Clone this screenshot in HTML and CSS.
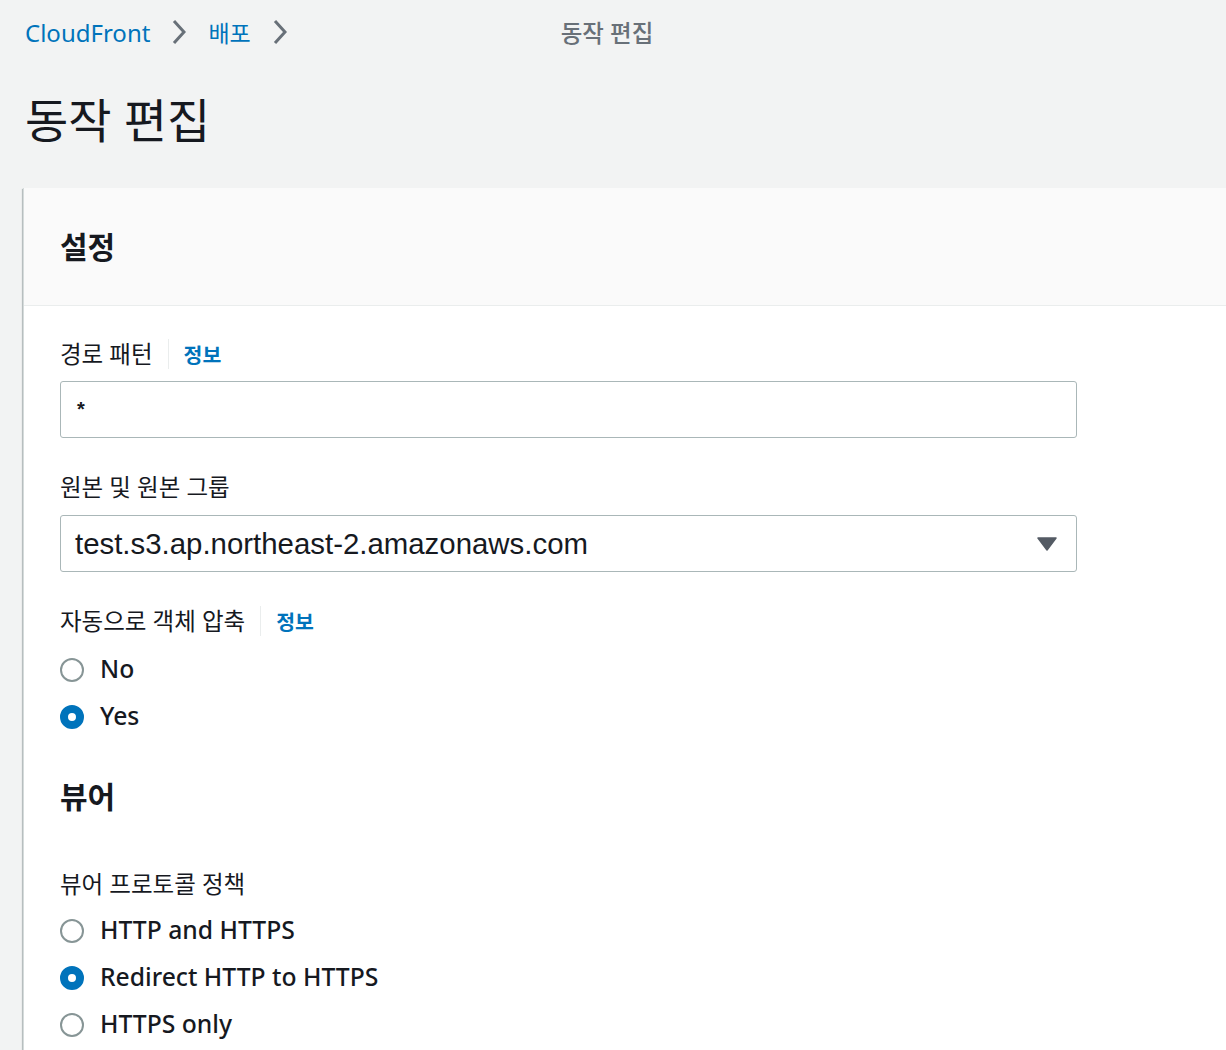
FILE: index.html
```html
<!DOCTYPE html>
<html lang="ko">
<head>
<meta charset="utf-8">
<title>동작 편집</title>
<link rel="stylesheet" href="styles.css">
</head>
<body>
<div class="page">
  <nav class="crumbs">
    <a class="crumb-link" href="#">CloudFront</a>
    <svg class="chev" width="14" height="26" viewBox="0 0 14 26"><path d="M2 2 L12 13 L2 24" fill="none" stroke="#687078" stroke-width="3" stroke-linejoin="miter"/></svg>
    <a class="crumb-link crumb-ko" href="#">배포</a>
    <svg class="chev" width="14" height="26" viewBox="0 0 14 26"><path d="M2 2 L12 13 L2 24" fill="none" stroke="#687078" stroke-width="3" stroke-linejoin="miter"/></svg>
    <span class="crumb-current">동작 편집</span>
  </nav>
  <h1 class="title">동작 편집</h1>

  <section class="card">
    <header class="card-head">
      <h2 class="card-title">설정</h2>
    </header>
    <div class="card-body">
      <div class="label-row label-first">
        <span class="label">경로 패턴</span>
        <span class="divider"></span>
        <a class="info" href="#">정보</a>
      </div>
      <div class="input">*</div>

      <div class="label-row label-gap">
        <span class="label">원본 및 원본 그룹</span>
      </div>
      <div class="select">
        <span class="select-text">test.s3.ap.northeast-2.amazonaws.com</span>
        <svg class="caret" width="20" height="14" viewBox="0 0 20 14"><path d="M1 1 L19 1 L10 13 Z" fill="#545b64" stroke="#545b64" stroke-width="1.5" stroke-linejoin="round"/></svg>
      </div>

      <div class="label-row label-gap">
        <span class="label">자동으로 객체 압축</span>
        <span class="divider"></span>
        <a class="info" href="#">정보</a>
      </div>
      <div class="radios radios-a">
        <div class="radio-row"><span class="radio"></span><span class="radio-label">No</span></div>
        <div class="radio-row"><span class="radio checked"></span><span class="radio-label">Yes</span></div>
      </div>

      <h2 class="section-title">뷰어</h2>

      <div class="label-row label-viewer">
        <span class="label">뷰어 프로토콜 정책</span>
      </div>
      <div class="radios radios-b">
        <div class="radio-row"><span class="radio"></span><span class="radio-label">HTTP and HTTPS</span></div>
        <div class="radio-row"><span class="radio checked"></span><span class="radio-label">Redirect HTTP to HTTPS</span></div>
        <div class="radio-row"><span class="radio"></span><span class="radio-label">HTTPS only</span></div>
      </div>
    </div>
  </section>
</div>
</body>
</html>
```

FILE: styles.css
```css
html, body {
  margin: 0;
  padding: 0;
  background: #f2f3f3;
  overflow: hidden;
  height: 1050px;
}
body {
  font-family: "Noto Sans", "Noto Sans CJK KR", sans-serif;
  color: #16191f;
}
.page {
  padding-left: 25px;
}
.crumbs {
  height: 64px;
  display: flex;
  align-items: center;
  font-size: 24px;
}
.crumb-link {
  color: #0073bb;
  text-decoration: none;
}
.crumb-ko {
  font-size: 23px;
}
.chev {
  margin: 0 22px 0 22px;
  display: block;
}
.crumb-current {
  color: #687078;
  font-weight: 500;
  font-size: 23.5px;
  margin-left: 252px;
}
.title {
  margin: 28px 0 0 0;
  font-size: 47px;
  line-height: 56px;
  font-weight: 400;
  height: 96px;
}
.card {
  margin-left: -2px;
  margin-right: -20px;
  background: #ffffff;
  box-shadow: 0 1px 1px 0 rgba(0, 28, 36, 0.3), -1px 1px 1px 0 rgba(0, 28, 36, 0.2);
  border-left: 1px solid #d5dbdb;
  height: 900px;
}
.card-head {
  background: #fafafa;
  height: 117px;
  border-bottom: 1px solid #eaeded;
  display: flex;
  align-items: center;
  padding-left: 36px;
}
.card-title {
  margin: 0;
  font-size: 30px;
  font-weight: 700;
  line-height: 40px;
}
.card-body {
  padding-left: 36px;
}
.label-row {
  display: flex;
  align-items: center;
  height: 30px;
}
.label-first { padding-top: 33px; }
.label-gap { margin-top: 34px; }
.label-viewer { margin-top: 52px; }
.label {
  font-size: 23.5px;
  line-height: 30px;
}
.divider {
  width: 1px;
  height: 30px;
  background: #eaeded;
  margin: 0 15px;
}
.info {
  color: #0073bb;
  font-weight: 700;
  font-size: 20.5px;
  text-decoration: none;
}
.input, .select {
  box-sizing: border-box;
  width: 1017px;
  height: 57px;
  margin-top: 12px;
  border: 1px solid #aab7b8;
  border-radius: 3px;
  background: #fff;
  display: flex;
  align-items: center;
}
.input {
  padding-left: 16px;
  font-family: "Liberation Sans", Arial, sans-serif;
  font-weight: 700;
  font-size: 20px;
}
.select {
  margin-top: 13px;
  padding-left: 14px;
  padding-right: 19px;
  justify-content: space-between;
}
.select-text {
  font-family: "Liberation Sans", Arial, sans-serif;
  font-size: 29.4px;
}
.caret { display: block; }
.radios-a { margin-top: 9px; }
.radios-b { margin-top: 7px; }
.radio-row {
  display: flex;
  align-items: center;
  height: 47px;
}
.radio {
  box-sizing: border-box;
  width: 24px;
  height: 24px;
  border-radius: 50%;
  border: 2px solid #879596;
  background: #fff;
  margin-right: 16px;
  margin-top: 2px;
}
.radio.checked {
  border: 8px solid #0073bb;
}
.radio-label {
  font-size: 24.7px;
  font-weight: 500;
}
.section-title {
  margin: 38px 0 0 0;
  font-size: 30px;
  font-weight: 700;
  line-height: 40px;
}
```
